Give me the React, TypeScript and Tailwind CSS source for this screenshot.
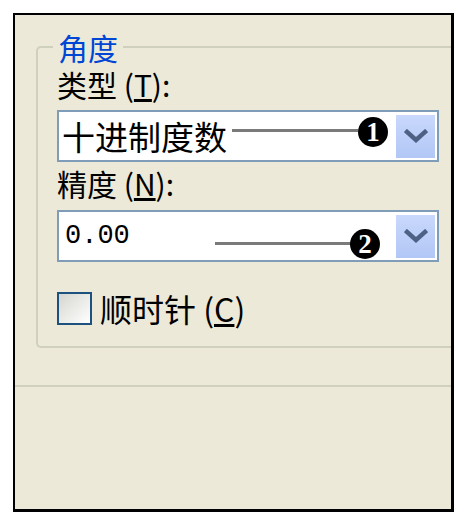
import React from 'react';

const cjk = { fontFamily: '"Noto Sans CJK SC", "Noto Sans", sans-serif' };

const Chevron = () => (
  <svg width="24" height="14" viewBox="0 0 24 14">
    <polyline points="3,3 12,11 21,3" fill="none" stroke="#4D6185" strokeWidth="4.5" strokeLinecap="square" />
  </svg>
);

const Marker = ({ n, left, top }: { n: string; left: number; top: number }) => (
  <div
    className="absolute w-[30px] h-[30px] rounded-full bg-black text-white flex items-center justify-center text-[27px] font-bold leading-none"
    style={{ left, top, fontFamily: '"Liberation Serif", serif' }}
  >
    {n}
  </div>
);

const Combo = ({
  value,
  mono,
  line,
  marker,
}: {
  value: string;
  mono?: boolean;
  line: { left: number; top: number; width: number };
  marker: { n: string; left: number; top: number };
}) => (
  <div className="relative w-[382px] h-[52px] border-2 border-[#7F9DB9] bg-white flex items-center">
    {mono ? (
      <span className="pl-[6px] text-[27px] leading-none text-black" style={{ fontFamily: '"Liberation Mono", monospace' }}>
        {value}
      </span>
    ) : (
      <span className="pl-[3px] text-[33px] leading-none text-black" style={cjk}>
        {value}
      </span>
    )}
    <div
      className="absolute h-[3px] bg-[#7a7a7a]"
      style={{ left: line.left, top: line.top, width: line.width }}
    />
    <Marker {...marker} />
    <div className="ml-auto mr-[2px] w-[39px] h-[43px] bg-gradient-to-b from-[#C9D8FC] to-[#B2C7F6] flex items-center justify-center">
      <Chevron />
    </div>
  </div>
);

const App = () => {
  return (
    <div className="w-[464px] h-[521px] bg-white pt-[13px] pl-[13px]" style={cjk}>
      <div className="w-[441px] h-[499px] border-t-2 border-l-2 border-r-[3px] border-b-[3px] border-black bg-[#ECE9D8] overflow-hidden">
        {/* group box, open on the right where it meets the panel edge */}
        <div className="relative ml-[21px] mt-[31px] border-t-2 border-l-2 border-b-2 border-r-0 border-[#D0D0BF] rounded-l-[5px] pl-[19px] pt-[20px] pb-[21px]">
          <span className="absolute left-[15px] -top-[16px] px-[5px] bg-[#ECE9D8] text-[30px] leading-[30px] text-[#0046D5]">
            角度
          </span>

          <div className="h-[32px] text-[30px] leading-[32px] text-black">
            类型 (<span className="underline">T</span>):
          </div>
          <div className="mt-[10px]">
            <Combo
              value="十进制度数"
              line={{ left: 173, top: 17, width: 126 }}
              marker={{ n: '1', left: 299, top: 5 }}
            />
          </div>

          <div className="mt-[6px] h-[30px] text-[30px] leading-[30px] text-black">
            精度 (<span className="underline">N</span>):
          </div>
          <div className="mt-[12px]">
            <Combo
              value="0.00"
              mono
              line={{ left: 156, top: 30, width: 136 }}
              marker={{ n: '2', left: 291, top: 17 }}
            />
          </div>

          <div className="mt-[30px] flex items-center gap-[8px]">
            <div className="w-[35px] h-[33px] border-2 border-[#1C5180] bg-gradient-to-br from-[#D6D6D0] to-white" />
            <span className="text-[32px] leading-[33px] text-black">
              顺时针 (<span className="underline">C</span>)
            </span>
          </div>
        </div>

        <div className="mt-[37px] h-[2px] bg-[#D0D0BF]" />
      </div>
    </div>
  );
};

export default App;
